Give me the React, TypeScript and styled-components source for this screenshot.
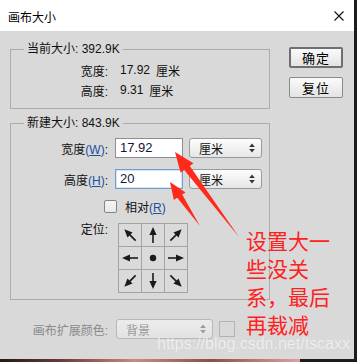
import React from "react";
import styled, { createGlobalStyle } from "styled-components";

const GlobalStyle = createGlobalStyle`
  body {
    margin: 0;
    background: #1c1c1c;
    font-family: "Liberation Sans", "Noto Sans CJK SC", sans-serif;
    font-size: 12px;
    color: #111;
  }
`;

const uiFont = `
  font-family: "Liberation Sans", "Noto Sans CJK SC", sans-serif;
  font-size: 12px;
`;

// ── page / window ──────────────────────────────────────────

const Page = styled.div`
  position: relative;
  width: 357px;
  height: 362px;
  overflow: hidden;
  background: #1c1c1c;
`;

const Window = styled.div`
  width: 354px;
  height: 359px;
  background: #d9d9d9;
  display: flex;
  flex-direction: column;
`;

const PhotoStrip = styled.div`
  width: 300px;
  height: 3px;
  background: linear-gradient(90deg, #241815 0%, #6a3a35 20%, #c98a86 45%, #8a5048 70%, #d9a3a0 100%);
`;

const TitleBar = styled.div`
  height: 31px;
  flex: none;
  background: #fff;
  display: flex;
  align-items: center;
  justify-content: space-between;
  padding: 1px 10px 0 8px;
  box-sizing: border-box;
`;

const Title = styled.span`
  ${uiFont}
  color: #000;
`;

const Body = styled.div`
  display: flex;
  gap: 19px;
  padding-left: 10px;
`;

const LeftCol = styled.div`
  width: 260px;
  padding-top: 18px;
  display: flex;
  flex-direction: column;
`;

const RightCol = styled.div`
  width: 54px;
  padding-top: 16px;
  display: flex;
  flex-direction: column;
  gap: 9px;
`;

// ── group boxes ───────────────────────────────────────────

const Group = styled.div<{ $pt: number; $pb: number; $mt?: number }>`
  position: relative;
  border: 1px solid #ababab;
  margin-top: ${(p) => p.$mt ?? 0}px;
  padding: ${(p) => p.$pt}px 0 ${(p) => p.$pb}px 0;
  display: flex;
  flex-direction: column;
`;

const Legend = styled.div`
  ${uiFont}
  position: absolute;
  top: -9px;
  left: 13px;
  padding: 0 3px;
  line-height: 16px;
  background: #d9d9d9;
  color: #111;
`;

const Row = styled.div<{ $mt?: number }>`
  display: flex;
  align-items: center;
  height: 20px;
  margin-top: ${(p) => p.$mt ?? 0}px;
`;

const Label = styled.span<{ $w?: number; $muted?: boolean }>`
  ${uiFont}
  width: ${(p) => p.$w ?? 97}px;
  flex: none;
  text-align: right;
  color: ${(p) => (p.$muted ? "#8a8a8a" : "#111")};
  white-space: nowrap;
`;

const Value = styled.span<{ $ml: number }>`
  ${uiFont}
  margin-left: ${(p) => p.$ml}px;
  white-space: nowrap;
`;

const Mn = styled.span`
  color: #1d4f9c;
  u {
    text-underline-offset: 1px;
  }
`;

// ── inputs ───────────────────────────────────────────────

const TextInput = styled.div<{ $focused?: boolean }>`
  ${uiFont}
  margin-left: 7px;
  width: 68px;
  height: 20px;
  box-sizing: border-box;
  background: #fff;
  border: 1px solid ${(p) => (p.$focused ? "#6d9fd6" : "#8e8e8e")};
  box-shadow: ${(p) => (p.$focused ? "inset 0 0 0 1px #d4e5f7" : "none")};
  padding: 0 4px;
  line-height: 18px;
  font-size: 13px;
  color: #15153a;
`;

const Select = styled.div<{ $w: number; $ml: number; $disabled?: boolean }>`
  ${uiFont}
  margin-left: ${(p) => p.$ml}px;
  width: ${(p) => p.$w}px;
  height: 20px;
  box-sizing: border-box;
  border: 1px solid ${(p) => (p.$disabled ? "#b8b8b8" : "#9a9a9a")};
  border-radius: 3px;
  background: ${(p) =>
    p.$disabled
      ? "linear-gradient(#ececec, #e2e2e2)"
      : "linear-gradient(#fdfdfd, #e6e6e6)"};
  color: ${(p) => (p.$disabled ? "#9a9a9a" : "#111")};
  display: flex;
  align-items: center;
  justify-content: space-between;
  padding: 0 6px 0 9px;
`;

const Spinner = ({ color }: { color: string }) => (
  <svg width="6" height="10" viewBox="0 0 6 10">
    <path d="M3 0.5 L5.8 4 L0.2 4 Z" fill={color} />
    <path d="M3 9.5 L5.8 6 L0.2 6 Z" fill={color} />
  </svg>
);

const CheckBox = styled.div`
  width: 13px;
  height: 13px;
  box-sizing: border-box;
  border: 1px solid #858585;
  border-radius: 2px;
  background: linear-gradient(#f6f6f6, #e8e8e8);
  margin-left: 93px;
  flex: none;
`;

const Swatch = styled.div`
  margin-left: 6px;
  width: 16px;
  height: 16px;
  box-sizing: border-box;
  border: 1px solid #b3b3b3;
`;

// ── anchor grid ──────────────────────────────────────────

const AnchorRow = styled.div`
  display: flex;
  align-items: flex-start;
  margin-top: 7px;
`;

const AnchorLabel = styled(Label)`
  line-height: 14px;
`;

const AnchorGrid = styled.div`
  margin-left: 10px;
  display: grid;
  grid-template-columns: repeat(3, 22px);
  grid-auto-rows: 22px;
  gap: 1px;
  padding: 1px;
  background: #a3a3a3;
`;

const Cell = styled.div`
  background: #dadada;
  display: flex;
  align-items: center;
  justify-content: center;
`;

const Arrow = ({ deg }: { deg: number }) => (
  <svg width="22" height="22" viewBox="0 0 22 22">
    <g transform={`rotate(${deg} 11 11)`}>
      <line x1="11" y1="19" x2="11" y2="9" stroke="#1a1a1a" strokeWidth="1.6" />
      <path d="M11 3 L14.6 11 L7.4 11 Z" fill="#1a1a1a" />
    </g>
  </svg>
);

const Dot = () => (
  <svg width="22" height="22" viewBox="0 0 22 22">
    <circle cx="11" cy="11" r="3.2" fill="#1a1a1a" />
  </svg>
);

// ── buttons ──────────────────────────────────────────────

const Button = styled.div<{ $default?: boolean }>`
  ${uiFont}
  height: 21px;
  box-sizing: border-box;
  border: ${(p) => (p.$default ? "2px solid #6f6f6f" : "1px solid #8a8a8a")};
  border-radius: 2px;
  background: linear-gradient(#fbfbfb, #e3e3e3);
  display: flex;
  align-items: center;
  justify-content: center;
  font-size: 13px;
  letter-spacing: 1px;
  color: #000;
`;

// ── overlays ─────────────────────────────────────────────

const Note = styled.div`
  position: absolute;
  left: 246px;
  top: 226px;
  display: flex;
  flex-direction: column;
  font-family: "Noto Sans CJK SC", sans-serif;
  font-size: 21px;
  color: #ff2020;
  white-space: nowrap;
`;

const NoteLine = styled.span<{ $last?: boolean }>`
  line-height: ${(p) => (p.$last ? 22 : 28)}px;
  padding-top: ${(p) => (p.$last ? 3 : 0)}px;
`;

const Watermark = styled.div`
  position: absolute;
  left: 157px;
  top: 336px;
  font-family: "Liberation Sans", sans-serif;
  font-size: 16px;
  line-height: 16px;
  color: rgba(255, 255, 255, 0.7);
  text-shadow: 0 0 1px rgba(0, 0, 0, 0.08);
`;

const ArrowLayer = styled.svg`
  position: absolute;
  left: 0;
  top: 0;
  pointer-events: none;
`;

const anchors = [-45, 0, 45, -90, null, 90, -135, 180, 135];
const noteLines = ["设置大一", "些没关", "系，最后", "再裁减"];

export default function App() {
  return (
    <Page>
      <GlobalStyle />
      <Window>
        <TitleBar>
          <Title>画布大小</Title>
          <svg width="10" height="10" viewBox="0 0 10 10">
            <path d="M0.5 0.5 L9.5 9.5 M9.5 0.5 L0.5 9.5" stroke="#111" strokeWidth="1.1" />
          </svg>
        </TitleBar>
        <Body>
          <LeftCol>
            <Group $pt={10} $pb={8}>
              <Legend>当前大小: 392.9K</Legend>
              <Row>
                <Label>宽度:</Label>
                <Value $ml={12}>17.92</Value>
                <Value $ml={6}>厘米</Value>
              </Row>
              <Row>
                <Label>高度:</Label>
                <Value $ml={12}>9.31</Value>
                <Value $ml={6}>厘米</Value>
              </Row>
            </Group>

            <Group $pt={14} $pb={6} $mt={14}>
              <Legend>新建大小: 843.9K</Legend>
              <Row>
                <Label>
                  宽度<Mn>(<u>W</u>)</Mn>:
                </Label>
                <TextInput>17.92</TextInput>
                <Select $w={73} $ml={6}>
                  厘米
                  <Spinner color="#333" />
                </Select>
              </Row>
              <Row $mt={11}>
                <Label>
                  高度<Mn>(<u>H</u>)</Mn>:
                </Label>
                <TextInput $focused>20</TextInput>
                <Select $w={73} $ml={6}>
                  厘米
                  <Spinner color="#333" />
                </Select>
              </Row>
              <Row $mt={7}>
                <CheckBox />
                <Value $ml={8}>
                  相对<Mn>(<u>R</u>)</Mn>
                </Value>
              </Row>
              <AnchorRow>
                <AnchorLabel>定位:</AnchorLabel>
                <AnchorGrid>
                  {anchors.map((deg, i) => (
                    <Cell key={i}>{deg === null ? <Dot /> : <Arrow deg={deg} />}</Cell>
                  ))}
                </AnchorGrid>
              </AnchorRow>
            </Group>

            <Row $mt={19}>
              <Label $w={98} $muted>
                画布扩展颜色:
              </Label>
              <Select $w={97} $ml={8} $disabled>
                背景
                <Spinner color="#9a9a9a" />
              </Select>
              <Swatch />
            </Row>
          </LeftCol>
          <RightCol>
            <Button $default>确定</Button>
            <Button>复位</Button>
          </RightCol>
        </Body>
      </Window>
      <PhotoStrip />

      <ArrowLayer width="357" height="362" viewBox="0 0 357 362">
        <polygon
          points="175,152 193.4,163.2 189.8,165.9 239,237 184.2,170.1 180.6,172.8"
          fill="#ff2a1a"
        />
        <polygon
          points="170,182 185.6,192.4 182.2,194.6 200,226 177.2,197.8 173.8,200"
          fill="#ff2a1a"
        />
      </ArrowLayer>

      <Note>
        {noteLines.map((line, i) => (
          <NoteLine key={i} $last={i === noteLines.length - 1}>
            {line}
          </NoteLine>
        ))}
      </Note>
      <Watermark>https://blog.csdn.net/tscaxx</Watermark>
    </Page>
  );
}
